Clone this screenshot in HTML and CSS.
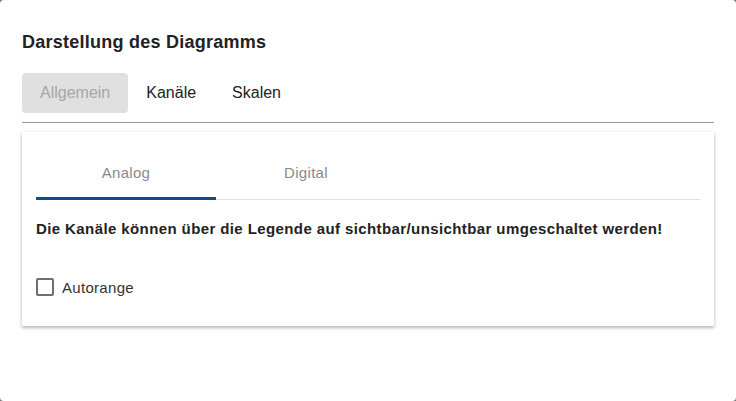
FILE: index.html
```html
<!DOCTYPE html>
<html lang="de">
<head>
    <meta charset="UTF-8">
    <meta name="viewport" content="width=device-width, initial-scale=1.0">
    <title>Darstellung des Diagramms</title>
    <link rel="stylesheet" href="styles.css">
</head>
<body>
    <div class="dialog">
        <h2 class="dialog-title">Darstellung des Diagramms</h2>

        <div class="tab-buttons">
            <button class="tab-button active" disabled>Allgemein</button>
            <button class="tab-button">Kanäle</button>
            <button class="tab-button">Skalen</button>
        </div>

        <div class="card">
            <div class="sub-tabs">
                <div class="sub-tab selected">Analog</div>
                <div class="sub-tab">Digital</div>
            </div>

            <p class="hint">Die Kanäle können über die Legende auf sichtbar/unsichtbar umgeschaltet werden!</p>

            <label class="check-row">
                <span class="check-box"></span>
                <span class="check-label">Autorange</span>
            </label>
        </div>
    </div>
</body>
</html>
```

FILE: styles.css
```css
body {
    margin: 0;
    background-color: #7a7a7a;
    font-family: "Liberation Sans", Arial, sans-serif;
    color: #222222;
}

.dialog {
    background-color: #ffffff;
    border-radius: 4px;
    height: 100vh;
    box-sizing: border-box;
    padding: 32px 22px 0 22px;
}

.dialog-title {
    margin: 0 0 20px 0;
    font-size: 18px;
    line-height: 21px;
    font-weight: bold;
    letter-spacing: 0.25px;
    color: #222222;
}

.tab-buttons {
    display: flex;
    padding-bottom: 9px;
    border-bottom: 1px solid #999999;
}

.tab-button {
    height: 40px;
    padding: 0 18px;
    border: none;
    border-radius: 4px;
    background: none;
    font-family: "Liberation Sans", Arial, sans-serif;
    font-size: 16px;
    color: #222222;
    cursor: pointer;
}

.tab-button.active {
    background-color: #e0e0e0;
    color: #a6a6a6;
}

.card {
    margin-top: 9px;
    padding: 16px 14px 30px 14px;
    background-color: #ffffff;
    box-shadow: 0 2px 3px rgba(0, 0, 0, 0.25), 0 0 6px rgba(0, 0, 0, 0.08);
}

.sub-tabs {
    display: flex;
    border-bottom: 1px solid #e0e0e0;
}

.sub-tab {
    width: 180px;
    height: 52px;
    box-sizing: border-box;
    margin-bottom: -1px;
    border-bottom: 3px solid transparent;
    display: flex;
    align-items: center;
    justify-content: center;
    font-size: 15px;
    letter-spacing: 0.3px;
    color: #8a8a8a;
}

.sub-tab.selected {
    border-bottom-color: #0d4a8f;
}

.hint {
    margin: 19px 0 0 0;
    font-size: 15px;
    line-height: 20px;
    font-weight: bold;
    letter-spacing: 0.4px;
    color: #222222;
}

.check-row {
    display: flex;
    align-items: center;
    gap: 8px;
    height: 18px;
    margin-top: 39px;
}

.check-box {
    width: 14px;
    height: 14px;
    border: 2px solid #6e6e6e;
    border-radius: 2px;
}

.check-label {
    font-size: 15px;
    letter-spacing: 0.3px;
    color: #333333;
}
```
